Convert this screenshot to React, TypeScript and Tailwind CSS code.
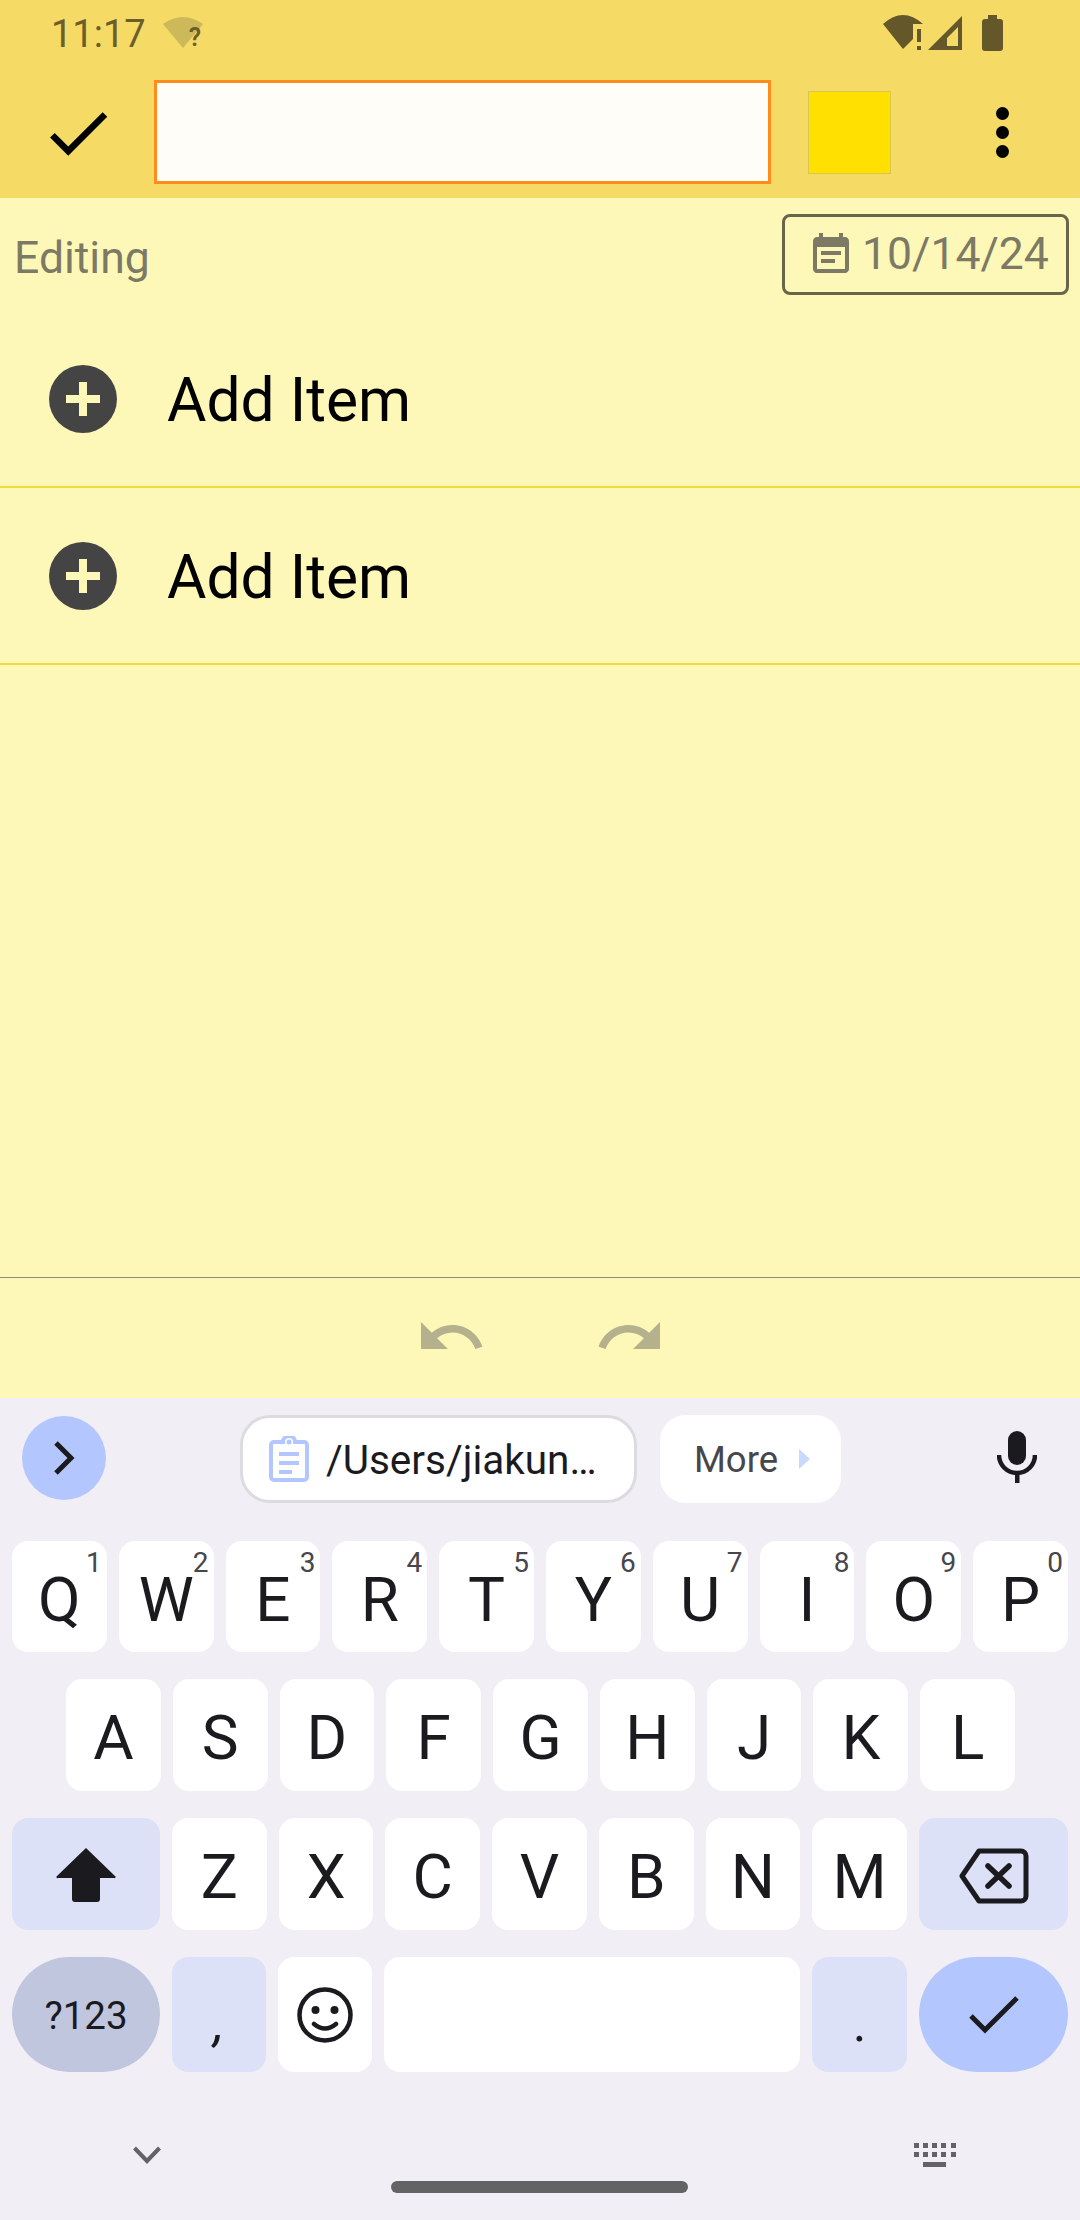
import React from 'react';

const FONT = 'font-["Roboto","Liberation_Sans",sans-serif]';

const row1 = [
  ['Q', '1'],
  ['W', '2'],
  ['E', '3'],
  ['R', '4'],
  ['T', '5'],
  ['Y', '6'],
  ['U', '7'],
  ['I', '8'],
  ['O', '9'],
  ['P', '0'],
];
const row2 = ['A', 'S', 'D', 'F', 'G', 'H', 'J', 'K', 'L'];
const row3 = ['Z', 'X', 'C', 'V', 'B', 'N', 'M'];

const LetterKey = ({ letter, hint }: { letter: string; hint?: string }) => (
  <div className="relative flex-1 flex items-center justify-center bg-white rounded-[16px] text-[62px] leading-none text-[#1b1b1f] pt-[6px]">
    {letter}
    {hint && (
      <span className="absolute top-[8px] right-[5px] text-[28px] leading-none text-[#47464b]">{hint}</span>
    )}
  </div>
);

const AddRow = () => (
  <div className="h-[177px] flex items-center border-b-2 border-[#F0DB3C] pl-[49px]">
    <svg width="68" height="68" viewBox="0 0 68 68" className="shrink-0">
      <circle cx="34" cy="34" r="34" fill="#444444" />
      <path d="M30 17h8v13h13v8H38v13h-8V38H17v-8h13z" fill="#FEF8B8" />
    </svg>
    <span className="ml-[50px] mt-[5px] text-[60.5px] leading-none text-black">Add Item</span>
  </div>
);

const App = () => {
  return (
    <div className={`w-[1080px] h-[2220px] flex flex-col overflow-hidden bg-[#FEF8B8] ${FONT}`}>
      {/* Status bar + toolbar */}
      <header className="h-[198px] shrink-0 bg-[#F5DA66]">
        <div className="h-[80px] flex items-start pl-[51px] pt-[14px]">
          <span className="text-[38px] leading-[40px] text-[#6B5E2C]">11:17</span>
          <div className="relative ml-[17px] mt-[2px] w-[42px] h-[34px]">
            <svg width="42" height="34" viewBox="0 0 42 34">
              <path d="M0 8Q20 -6 40 8L20 32z" fill="#CDB85A" />
            </svg>
            <span className="absolute left-[26px] top-[9px] text-[25px] leading-[25px] font-semibold text-[#6B5E2C]">?</span>
          </div>
          <svg width="122" height="38" viewBox="883 14 122 38" className="ml-auto mr-[75px] mt-0">
            <path d="M883 24Q903 6 923 24H913V39L903 49z" fill="#64572A" />
            <path d="M917 29h4v13h-4zM917 46h4v4h-4z" fill="#64572A" />
            <path fillRule="evenodd" d="M928 50L962 16V50zM947 46H958V27L947 38z" fill="#64572A" />
            <path d="M988 15h9v4h3a3 3 0 0 1 3 3v26a3 3 0 0 1-3 3h-15a3 3 0 0 1-3-3V22a3 3 0 0 1 3-3h3z" fill="#64572A" />
          </svg>
        </div>
        <div className="flex items-start">
          <svg width="78" height="78" viewBox="0 0 24 24" className="ml-[39px] mt-[14px] shrink-0">
            <path d="M9 16.17L4.83 12l-1.42 1.41L9 19 21 7l-1.41-1.41z" fill="#000" />
          </svg>
          <div className="ml-[37px] w-[617px] h-[104px] border-[3px] border-[#FF8C1A] bg-[#FFFDF7]"></div>
          <div className="ml-[37px] mt-[11px] w-[83px] h-[83px] bg-[#FFE000] border border-[#D9C64E]"></div>
          <div className="ml-[105px] mt-[27px] flex flex-col gap-[6px]">
            <div className="w-[13px] h-[13px] rounded-full bg-black"></div>
            <div className="w-[13px] h-[13px] rounded-full bg-black"></div>
            <div className="w-[13px] h-[13px] rounded-full bg-black"></div>
          </div>
        </div>
      </header>

      {/* Date row */}
      <div className="h-[113px] shrink-0 flex items-start justify-between pl-[14px] pr-[11px] pt-[16px] text-[#7C7A65] text-[44.5px] leading-none">
        <span className="mt-[22px]">Editing</span>
        <div className="w-[287px] h-[81px] flex items-center pl-[22px] border-[3px] border-[#68654A] rounded-[8px]">
          <svg width="48" height="48" viewBox="0 0 24 24" className="shrink-0">
            <path
              d="M17 10H7v2h10v-2zm2-7h-1V1h-2v2H8V1H6v2H5c-1.11 0-1.99.9-1.99 2L3 19c0 1.1.89 2 2 2h14c1.1 0 2-.9 2-2V5c0-1.1-.9-2-2-2zm0 16H5V8h14v11zm-5-5H7v2h7v-2z"
              fill="#7C7A65"
            />
          </svg>
          <span className="ml-[7px]">10/14/24</span>
        </div>
      </div>

      <AddRow />
      <AddRow />

      <div className="flex-1"></div>

      {/* Undo / redo */}
      <div className="h-[121px] shrink-0 flex items-center justify-center gap-[107px] border-t border-[#8C8C80]">
        <svg width="72" height="72" viewBox="0 0 24 24" className="mb-[2px]">
          <path
            d="M12.5 8c-2.65 0-5.05.99-6.9 2.6L2 7v9h9l-3.62-3.62c1.39-1.16 3.16-1.88 5.12-1.88 3.54 0 6.55 2.31 7.6 5.5l2.37-.78C21.08 11.03 17.15 8 12.5 8z"
            fill="#B5B18C"
          />
        </svg>
        <svg width="72" height="72" viewBox="0 0 24 24" className="mb-[2px]">
          <path
            d="M18.4 10.6C16.55 8.99 14.15 8 11.5 8c-4.65 0-8.58 3.03-9.96 7.22L3.9 16c1.05-3.19 4.05-5.5 7.6-5.5 1.95 0 3.73.72 5.12 1.88L13 16h9V7l-3.6 3.6z"
            fill="#B5B18C"
          />
        </svg>
      </div>

      {/* Keyboard */}
      <div className="h-[822px] shrink-0 flex flex-col bg-[#F1EFF5]">
        <div className="h-[143px] shrink-0 flex items-start pt-[17px]">
          <div className="ml-[22px] mt-[1px] w-[84px] h-[84px] rounded-full bg-[#B3C6FE] flex items-center justify-center">
            <svg width="24" height="34" viewBox="0 0 24 34">
              <path d="M4 2L19 17L4 32" fill="none" stroke="#1B1B1F" strokeWidth="5" />
            </svg>
          </div>
          <div className="ml-[134px] w-[397px] h-[88px] flex items-center pl-[26px] bg-white border-[3px] border-[#DCDCE0] rounded-[30px]">
            <svg width="40" height="46" viewBox="0 0 40 46" className="shrink-0">
              <path
                d="M5 6h9a6 6 0 0 1 12 0h9a3 3 0 0 1 3 3v32a3 3 0 0 1-3 3H5a3 3 0 0 1-3-3V9a3 3 0 0 1 3-3z"
                fill="none"
                stroke="#B3C6FE"
                strokeWidth="4"
              />
              <circle cx="20" cy="6" r="2.5" fill="#B3C6FE" />
              <path d="M10 16h20v4H10zM10 25h20v4H10zM10 34h13v4H10z" fill="#B3C6FE" />
            </svg>
            <span className="ml-[17px] mt-[3px] text-[40.5px] leading-none text-[#1B1B1F] whitespace-nowrap">/Users/jiakun…</span>
          </div>
          <div className="ml-[23px] w-[181px] h-[88px] flex items-center pl-[34px] bg-white rounded-[26px]">
            <span className="mt-[2px] text-[36.5px] leading-none text-[#47464B]">More</span>
            <svg width="11" height="20" viewBox="0 0 11 20" className="ml-[21px]">
              <path d="M0 0L11 10L0 20z" fill="#C9D8FE" />
            </svg>
          </div>
          <svg width="40" height="52" viewBox="0 0 40 52" className="ml-[156px] mt-[16px]">
            <rect x="11" y="0" width="18" height="34" rx="9" fill="#1B1B1F" />
            <path d="M2 24a18 18 0 0 0 36 0" fill="none" stroke="#1B1B1F" strokeWidth="4.5" />
            <rect x="18" y="40" width="4.5" height="12" fill="#1B1B1F" />
          </svg>
        </div>

        <div className="h-[111px] shrink-0 flex gap-[12px] px-[12px]">
          {row1.map(([l, h]) => (
            <LetterKey key={l} letter={l} hint={h} />
          ))}
        </div>

        <div className="h-[112px] shrink-0 mt-[27px] flex gap-[12px] pl-[66px] pr-[65px]">
          {row2.map((l) => (
            <LetterKey key={l} letter={l} />
          ))}
        </div>

        <div className="h-[112px] shrink-0 mt-[27px] flex gap-[12px] px-[12px]">
          <div className="w-[148px] shrink-0 flex items-center justify-center bg-[#DDE1F7] rounded-[16px]">
            <svg width="60" height="54" viewBox="0 0 60 54" className="mt-[2px]">
              <path d="M30 0L59 28a1 1 0 0 1-1 2H44V51a3 3 0 0 1-3 3H19a3 3 0 0 1-3-3V30H2a1 1 0 0 1-1-2z" fill="#1B1B1F" />
            </svg>
          </div>
          {row3.map((l) => (
            <LetterKey key={l} letter={l} />
          ))}
          <div className="w-[149px] shrink-0 flex items-center justify-center bg-[#DDE1F7] rounded-[16px]">
            <svg width="70" height="56" viewBox="0 0 70 56" className="mt-[4px]">
              <path
                d="M20 3H62a5 5 0 0 1 5 5V48a5 5 0 0 1-5 5H20L3 28z"
                fill="none"
                stroke="#1B1B1F"
                strokeWidth="5"
                strokeLinejoin="round"
              />
              <path d="M29 18L50 38M50 18L29 38" fill="none" stroke="#1B1B1F" strokeWidth="5.5" strokeLinecap="round" />
            </svg>
          </div>
        </div>

        <div className="h-[115px] shrink-0 mt-[27px] flex gap-[12px] px-[12px] text-[#1B1B1F]">
          <div className="w-[148px] shrink-0 flex items-center justify-center bg-[#BFC6DE] rounded-full text-[38.5px] leading-none pt-[3px]">
            ?123
          </div>
          <div className="w-[94px] shrink-0 flex justify-center bg-[#DDE1F7] rounded-[16px] text-[52px] italic leading-none pt-[41px]">
            ,
          </div>
          <div className="w-[94px] shrink-0 flex items-center justify-center bg-white rounded-[16px]">
            <svg width="56" height="56" viewBox="0 0 56 56">
              <circle cx="28" cy="28" r="25.5" fill="none" stroke="#1B1B1F" strokeWidth="4.5" />
              <circle cx="18.5" cy="23" r="4" fill="#1B1B1F" />
              <circle cx="37.5" cy="23" r="4" fill="#1B1B1F" />
              <path d="M17 37Q28 46 39 37" fill="none" stroke="#1B1B1F" strokeWidth="4.5" strokeLinecap="round" />
            </svg>
          </div>
          <div className="flex-1 bg-white rounded-[16px]"></div>
          <div className="w-[95px] shrink-0 flex justify-center bg-[#DDE1F7] rounded-[16px] text-[52px] leading-none pt-[41px]">
            .
          </div>
          <div className="w-[149px] shrink-0 flex items-center justify-center bg-[#B3C6FE] rounded-full">
            <svg width="50" height="38" viewBox="0 0 50 38">
              <path d="M2 20L16 34L48 2" fill="none" stroke="#1B1B1F" strokeWidth="5" />
            </svg>
          </div>
        </div>

        {/* Nav bar */}
        <div className="flex-1 flex items-start pl-[133px]">
          <svg width="28" height="18" viewBox="0 0 28 18" className="mt-[74px] shrink-0">
            <path d="M1.5 2L14 15L26.5 2" fill="none" stroke="#636366" strokeWidth="4" />
          </svg>
          <div className="ml-[230px] mt-[109px] w-[297px] h-[12px] rounded-full bg-[#636366] shrink-0"></div>
          <svg width="42" height="24" viewBox="0 0 42 24" className="ml-[226px] mt-[71px] shrink-0">
            <path
              d="M0 0h5v5H0zM9 0h5v5H9zM18 0h5v5h-5zM27 0h5v5h-5zM37 0h5v5h-5zM0 9h5v5H0zM9 9h5v5H9zM18 9h5v5h-5zM27 9h5v5h-5zM37 9h5v5h-5zM9 19h23v5H9z"
              fill="#636366"
            />
          </svg>
        </div>
      </div>
    </div>
  );
};

export default App;
